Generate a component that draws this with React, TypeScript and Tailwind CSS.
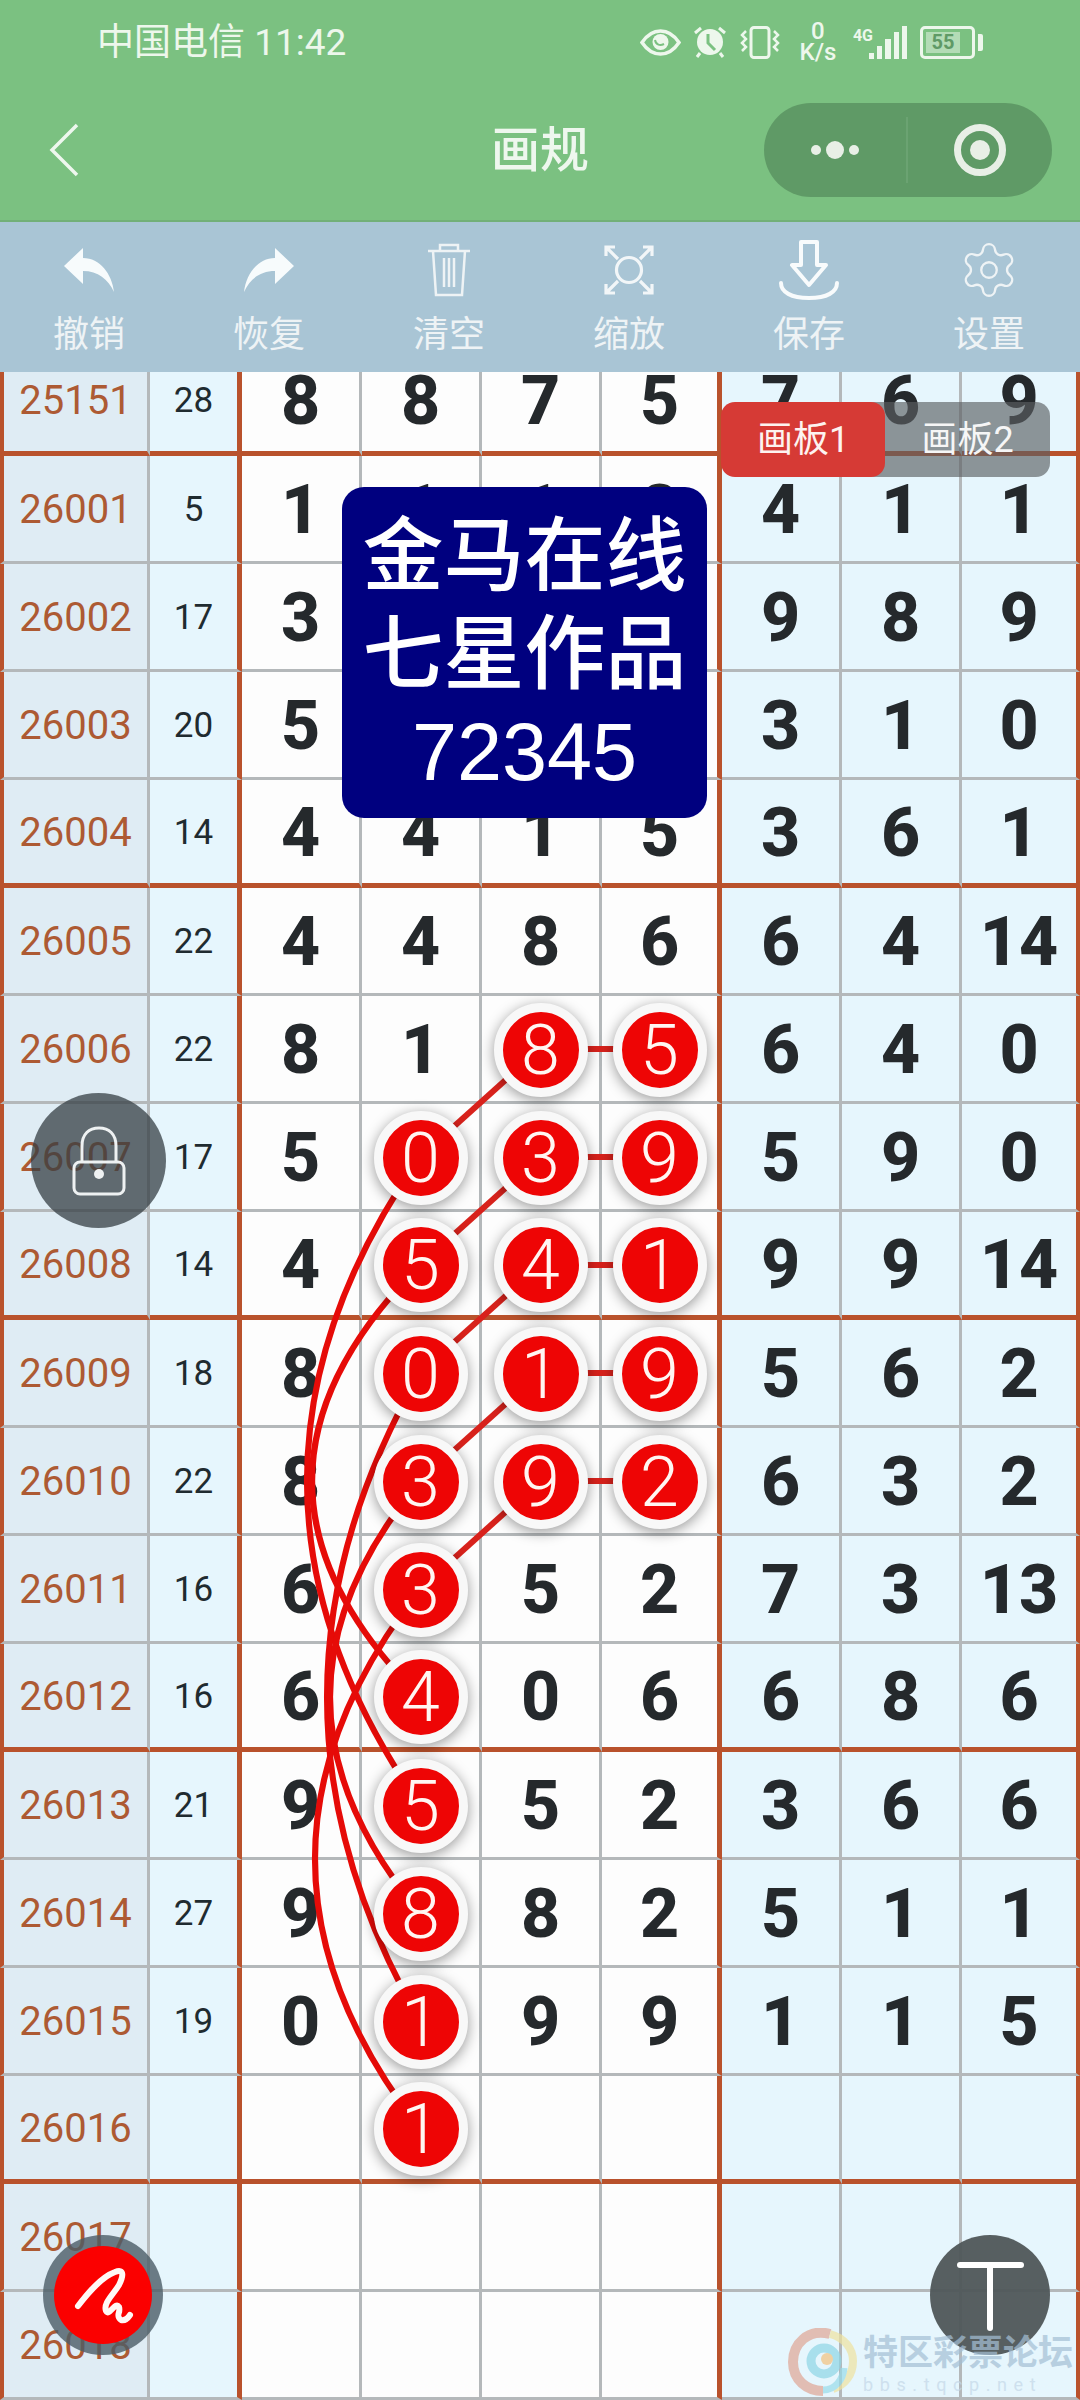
import { Settings } from 'lucide-react'

interface Row {
  id: string
  sum: string
  nums: string[]
  balls?: number[]
  thick?: boolean
}

const ROWS: Row[] = [
  { id: '25151', sum: '28', nums: ['8', '8', '7', '5', '7', '6', '9'], thick: true },
  { id: '26001', sum: '5', nums: ['1', '1', '1', '8', '4', '1', '1'] },
  { id: '26002', sum: '17', nums: ['3', '', '', '', '9', '8', '9'] },
  { id: '26003', sum: '20', nums: ['5', '', '', '', '3', '1', '0'] },
  { id: '26004', sum: '14', nums: ['4', '4', '1', '5', '3', '6', '1'], thick: true },
  { id: '26005', sum: '22', nums: ['4', '4', '8', '6', '6', '4', '14'] },
  { id: '26006', sum: '22', nums: ['8', '1', '8', '5', '6', '4', '0'], balls: [2, 3] },
  { id: '26007', sum: '17', nums: ['5', '0', '3', '9', '5', '9', '0'], balls: [1, 2, 3] },
  { id: '26008', sum: '14', nums: ['4', '5', '4', '1', '9', '9', '14'], balls: [1, 2, 3], thick: true },
  { id: '26009', sum: '18', nums: ['8', '0', '1', '9', '5', '6', '2'], balls: [1, 2, 3] },
  { id: '26010', sum: '22', nums: ['8', '3', '9', '2', '6', '3', '2'], balls: [1, 2, 3] },
  { id: '26011', sum: '16', nums: ['6', '3', '5', '2', '7', '3', '13'], balls: [1] },
  { id: '26012', sum: '16', nums: ['6', '4', '0', '6', '6', '8', '6'], balls: [1], thick: true },
  { id: '26013', sum: '21', nums: ['9', '5', '5', '2', '3', '6', '6'], balls: [1] },
  { id: '26014', sum: '27', nums: ['9', '8', '8', '2', '5', '1', '1'], balls: [1] },
  { id: '26015', sum: '19', nums: ['0', '1', '9', '9', '1', '1', '5'], balls: [1] },
  { id: '26016', sum: '', nums: ['', '1', '', '', '', '', ''], balls: [1], thick: true },
  { id: '26017', sum: '', nums: ['', '', '', '', '', '', ''] },
  { id: '26018', sum: '', nums: ['', '', '', '', '', '', ''] },
]

// centre of a row on the page, rows are 108 apart
const rowY = (n: number) => 1049 + (n - 6) * 108

// start row, end row, x of the control point for the long curves in col 2
const CURVES = [
  [7, 13, 194],
  [8, 12, 204],
  [9, 15, 234],
  [10, 14, 240],
  [11, 16, 210],
]

function Connectors() {
  return (
    <svg className="absolute left-0 top-0 z-10 pointer-events-none" width="1080" height="2400" fill="none">
      {[6, 7, 8, 9, 10].map(n => (
        <g key={n} stroke="#d8221c" strokeWidth="6">
          <line x1="540" y1={rowY(n)} x2="660" y2={rowY(n)} />
          <line x1="540" y1={rowY(n)} x2="420" y2={rowY(n + 1)} />
        </g>
      ))}
      {CURVES.map(([a, b, c]) => (
        <path
          key={a}
          d={`M420 ${rowY(a)} Q${c} ${(rowY(a) + rowY(b)) / 2} 420 ${rowY(b)}`}
          stroke="#e60b08"
          strokeWidth="6"
        />
      ))}
    </svg>
  )
}

function Ball({ value }: { value: string }) {
  return (
    <div className="relative z-20 flex h-[94px] w-[94px] items-center justify-center rounded-full border-[9px] border-[#f8f8f8] bg-[#ee0505] text-[70px] font-light leading-none text-[#fff6f2] shadow-[0_3px_14px_rgba(0,0,0,0.4)]">
      {value}
    </div>
  )
}

function GridRow({ row }: { row: Row }) {
  const line = row.thick ? 'border-b-[5px] border-b-[#b9522c]' : 'border-b-[3px] border-b-[#b4b8ba]'
  return (
    <div className="grid h-[108px] grid-cols-[150px_92px_120px_120px_120px_120px_120px_120px_118px]">
      <div className={`flex items-center justify-center border-l-4 border-r-[3px] border-l-[#b9522c] border-r-[#b4b8ba] bg-[#dfecf4] pt-[3px] text-[40px] text-[#ad5a33] ${line}`}>
        {row.id}
      </div>
      <div className={`flex items-center justify-center border-r-[5px] border-r-[#b9522c] bg-[#e6f6fd] pt-[3px] text-[35px] text-[#1f2b30] ${line}`}>
        {row.sum}
      </div>
      {row.nums.map((n, i) => (
        <div
          key={i}
          className={`flex items-center justify-center pt-[3px] text-[68px] font-extrabold leading-none text-[#25292c] ${line} ${i < 4 ? 'bg-[#fdfdfd]' : 'bg-[#e6f6fd]'} ${i === 3 ? 'border-r-[5px] border-r-[#b9522c]' : i === 6 ? 'border-r-4 border-r-[#b9522c]' : 'border-r-[3px] border-r-[#b4b8ba]'}`}
        >
          {row.balls?.includes(i) ? <Ball value={n} /> : n}
        </div>
      ))}
    </div>
  )
}

function StatusBar() {
  return (
    <div className="flex h-[82px] items-center justify-between pl-[97px] pr-[97px] pt-[2px] text-[#edf7ec]">
      <span className="text-[37px] leading-none">中国电信 11:42</span>
      <div className="flex items-center">
        <svg width="41" height="27" viewBox="0 0 41 27" fill="none" stroke="#edf7ec">
          <path d="M2 13.5C8 4.5 14 2 20.5 2S33 4.5 39 13.5C33 22.5 27 25 20.5 25S8 22.5 2 13.5Z" strokeWidth="3.5" />
          <circle cx="20.5" cy="13" r="8" fill="#edf7ec" stroke="none" />
          <path d="M15 11c1 5 5 6 9 4" stroke="#7bc181" strokeWidth="2" />
        </svg>
        <svg className="ml-3" width="34" height="32" viewBox="0 0 34 32" fill="none">
          <circle cx="17" cy="16" r="13" fill="#edf7ec" />
          <path d="M15 8v9l7 7" stroke="#7bc181" strokeWidth="3" />
          <path d="M2 7l6-5M32 7l-6-5M7 27l-3 4M27 27l3 4" stroke="#edf7ec" strokeWidth="3" />
        </svg>
        <svg className="ml-[13px]" width="40" height="33" viewBox="0 0 40 33" fill="none" stroke="#edf7ec">
          <rect x="11" y="1.5" width="18" height="30" rx="3" strokeWidth="3" />
          <path d="M6 5L2 9l4 4-4 4 4 4-4 4M34 5l4 4-4 4 4 4-4 4 4 4" strokeWidth="2.5" />
        </svg>
        <div className="ml-5 flex w-[36px] flex-col items-center text-[24px] font-medium leading-[21px]">
          <span>0</span>
          <span>K/s</span>
        </div>
        <div className="ml-[17px] flex h-[34px] items-end">
          <div className="mb-[15px] text-[16px] font-bold leading-none">4G</div>
          <svg className="-ml-[4px]" width="38" height="33" viewBox="0 0 38 33" fill="#edf7ec">
            <rect x="0" y="27" width="5" height="6" />
            <rect x="8" y="20" width="5" height="13" />
            <rect x="16" y="13" width="6" height="20" />
            <rect x="25" y="6" width="5" height="27" />
            <rect x="33" y="0" width="5" height="33" />
          </svg>
        </div>
        <div className="ml-[13px] flex items-center">
          <div className="flex h-[33px] w-[55px] items-center rounded-[5px] border-[3px] border-[#edf7ec] p-[3px]">
            <div className="flex h-full w-[34px] items-center justify-center bg-[#b3dcb6] text-[20px] font-bold leading-none text-[#5f9a66]">
              55
            </div>
          </div>
          <div className="ml-[3px] h-[17px] w-[5px] rounded-r-[2px] bg-[#edf7ec]" />
        </div>
      </div>
    </div>
  )
}

function NavBar() {
  return (
    <div className="grid h-[140px] grid-cols-[1fr_auto_1fr] items-center border-b-2 border-b-[#72b078] pb-[2px]">
      <svg className="ml-[48px]" width="32" height="54" viewBox="0 0 32 54" fill="none" stroke="#eef7ee" strokeWidth="3.5">
        <path d="M29 2L4 27l25 25" />
      </svg>
      <span className="text-[49px] font-medium leading-none text-[#eef7ee]">画规</span>
      <div className="mr-[28px] flex h-[94px] w-[288px] items-center justify-self-end rounded-full bg-[#5f9a66]">
        <div className="flex h-[66px] w-[144px] items-center justify-center gap-[5px] border-r-2 border-r-[#6ba372]">
          <div className="h-[10px] w-[10px] rounded-full bg-[#e8efe6]" />
          <div className="h-[18px] w-[18px] rounded-full bg-[#e8efe6]" />
          <div className="h-[10px] w-[10px] rounded-full bg-[#e8efe6]" />
        </div>
        <div className="flex flex-1 items-center justify-center">
          <div className="flex h-[52px] w-[52px] items-center justify-center rounded-full border-[7px] border-[#e8efe6]">
            <div className="h-[20px] w-[20px] rounded-full bg-[#e8efe6]" />
          </div>
        </div>
      </div>
    </div>
  )
}

const TOOLS = [
  {
    label: '撤销',
    icon: (
      <svg width="52" height="44" viewBox="0 0 52 44" fill="#f7fbfc">
        <path d="M1 18L20 0V10C37 10 49 26 51 44C45 31 35 23 20 23V36Z" />
      </svg>
    ),
  },
  {
    label: '恢复',
    icon: (
      <svg width="52" height="44" viewBox="0 0 52 44" fill="#f7fbfc">
        <path d="M51 18L32 0V10C15 10 3 26 1 44C7 31 17 23 32 23V36Z" />
      </svg>
    ),
  },
  {
    label: '清空',
    icon: (
      <svg width="44" height="54" viewBox="0 0 44 54" fill="none" stroke="#eef3f5" strokeWidth="2.5">
        <path d="M1 8H43M13 8V2H31V8M6 8L9 52H35L38 8M17 15V44M22 15V44M27 15V44" />
      </svg>
    ),
  },
  {
    label: '缩放',
    icon: (
      <svg width="52" height="52" viewBox="0 0 52 52" fill="none" stroke="#f2f6f8" strokeWidth="3.2">
        <circle cx="26" cy="26" r="12.5" />
        <path d="M15 15L3 3M3 12V3H12M37 15L49 3M40 3H49V12M15 37L3 49M3 40V49H12M37 37L49 49M49 40V49H40" />
      </svg>
    ),
  },
  {
    label: '保存',
    icon: (
      <svg width="60" height="60" viewBox="0 0 60 60" fill="none" stroke="#f8fbfc" strokeWidth="4" strokeLinejoin="round" strokeLinecap="round">
        <path d="M22 2H38V25H47L30 45L13 25H22Z" />
        <path d="M2 43C2 52 12 58 30 58S58 52 58 43" />
      </svg>
    ),
  },
  {
    label: '设置',
    icon: <Settings size={62} strokeWidth={0.9} color="#eef3f5" />,
  },
]

function Toolbar() {
  return (
    <div className="grid h-[150px] grid-cols-6 bg-[#a9c5d5] pt-[18px]">
      {TOOLS.map(t => (
        <div key={t.label} className="flex flex-col items-center pr-[2px]">
          <div className="flex h-[60px] items-center justify-center">{t.icon}</div>
          <span className="mt-[15px] text-[36px] leading-[40px] text-[#eef3f5]">{t.label}</span>
        </div>
      ))}
    </div>
  )
}

function Watermark() {
  return (
    <div className="absolute left-[788px] top-[2328px] z-40 flex items-start opacity-70">
      <svg width="70" height="68" viewBox="0 0 70 68" fill="none">
        <path d="M42 6C20 0 5 16 5 34c0 18 14 29 30 29" stroke="#e0a595" strokeWidth="10" />
        <path d="M42 6c15 4 23 15 23 27 0 14-8 24-20 28" stroke="#efe3a0" strokeWidth="8" />
        <path d="M35 62c12 0 20-10 21-22" stroke="#98dcea" strokeWidth="7" />
        <circle cx="36" cy="33" r="13" stroke="#8fd6e6" strokeWidth="9" />
        <circle cx="39" cy="31" r="6" fill="#f3c27e" />
      </svg>
      <div className="ml-[5px] flex flex-col">
        <span className="mt-[8px] whitespace-nowrap text-[35px] font-bold leading-[36px] text-[#a4bfd5]">特区彩票论坛</span>
        <span className="mt-[4px] whitespace-nowrap text-[18px] leading-[18px] tracking-[6.6px] text-[#c4d8e8]">bbs.tqcp.net</span>
      </div>
    </div>
  )
}

export default function App() {
  return (
    <div className="relative flex h-[2400px] w-[1080px] flex-col overflow-hidden bg-white font-['Roboto','Noto_Sans_CJK_SC',sans-serif]">
      <div className="bg-[#7bc181]">
        <StatusBar />
        <NavBar />
      </div>
      <Toolbar />

      {/* the sheet is scrolled a little, first row is cut by the toolbar */}
      <div className="flex-1 overflow-hidden">
        <div className="-mt-[24px]">
          {ROWS.map(r => (
            <GridRow key={r.id} row={r} />
          ))}
        </div>
      </div>

      <Connectors />

      {/* board tabs */}
      <div className="absolute left-[721px] top-[402px] z-30 flex h-[75px] text-[36px] leading-none">
        <div className="relative z-10 flex w-[164px] items-center justify-center rounded-[14px] bg-[#d63a35] text-[#fdf3f0]">画板1</div>
        <div className="-ml-[25px] flex w-[190px] items-center justify-center rounded-[14px] bg-[#5a5f63]/65 pl-[25px] text-[#f6f6f6]">画板2</div>
      </div>

      {/* title card */}
      <div className="absolute left-[342px] top-[487px] z-30 flex h-[331px] w-[365px] flex-col items-center justify-center rounded-[22px] bg-[#00007f] pt-[3px] font-['Liberation_Sans','Noto_Sans_CJK_SC',sans-serif] text-[81px] font-medium leading-[98px] text-white">
        <span>金马在线</span>
        <span>七星作品</span>
        <span>72345</span>
      </div>

      {/* lock */}
      <div className="absolute left-[31px] top-[1093px] z-30 flex h-[135px] w-[135px] items-center justify-center rounded-full bg-[#353f44]/75">
        <svg width="54" height="70" viewBox="0 0 54 70" fill="none" stroke="#eef1f2" strokeWidth="3">
          <path d="M10 36V20C10 8 17 2 27 2S44 8 44 20V36" />
          <rect x="2" y="36" width="50" height="32" rx="6" />
          <circle cx="27" cy="48" r="5" fill="#eef1f2" stroke="none" />
        </svg>
      </div>

      {/* brush */}
      <div className="absolute left-[43px] top-[2235px] z-30 flex h-[120px] w-[120px] items-center justify-center rounded-full bg-[#4b5c66]/80">
        <div className="flex h-[98px] w-[98px] items-center justify-center rounded-full bg-[#fb0000]">
          <svg width="98" height="98" viewBox="11 11 98 98" fill="none" stroke="#fff8f6" strokeWidth="6" strokeLinecap="round" strokeLinejoin="round">
            <path d="M35 71C45 58 58 42 72 37C82 33 80 42 76 50C70 60 60 68 63 76C66 82 72 66 76 72C78 78 72 80 78 85C82 86 85 83 87 80" />
          </svg>
        </div>
      </div>

      {/* text tool */}
      <div className="absolute left-[930px] top-[2235px] z-30 flex h-[120px] w-[120px] flex-col items-center rounded-full bg-[#4f5658]/95 pt-[27px]">
        <div className="h-[6px] w-[67px] rounded-[3px] bg-white" />
        <div className="h-[63px] w-[6px] rounded-b-[3px] bg-white" />
      </div>

      <Watermark />
    </div>
  )
}
